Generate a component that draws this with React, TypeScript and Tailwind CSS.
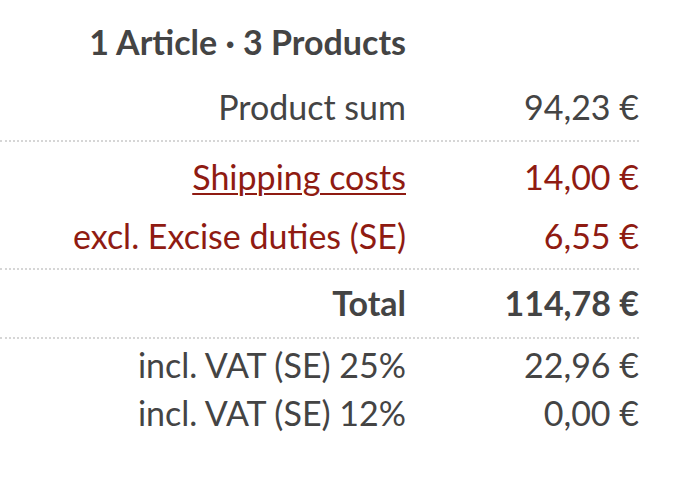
import React from "react";

type Row = {
    label: string;
    value: string;
    link?: boolean;
    red?: boolean;
    bold?: boolean;
};

// spacing per block is taken from the screenshot, not from a scale
const groups: { rows: Row[]; box: string; row: string; border: boolean }[] = [
    {
        rows: [{ label: "Product sum", value: "94,23 €" }],
        box: "pt-[13px] pb-[5px]",
        row: "py-1 leading-[48px]",
        border: true,
    },
    {
        rows: [
            { label: "Shipping costs", value: "14,00 €", link: true, red: true },
            { label: "excl. Excise duties (SE)", value: "6,55 €", red: true },
        ],
        box: "flex flex-col gap-[3px] pt-[7px] pb-[4px]",
        row: "py-1 leading-[48px]",
        border: true,
    },
    {
        rows: [{ label: "Total", value: "114,78 €", bold: true }],
        box: "pt-[5px] pb-[6px]",
        row: "py-1 leading-[48px]",
        border: true,
    },
    {
        rows: [
            { label: "incl. VAT (SE) 25%", value: "22,96 €" },
            { label: "incl. VAT (SE) 12%", value: "0,00 €" },
        ],
        box: "flex flex-col gap-[6px] pt-[5px]",
        row: "leading-[42px]",
        border: false,
    },
];

export default function App() {
    return (
        <div className="min-h-[478px] bg-white pt-[18px] font-['Lato',sans-serif] text-[34px] leading-[48px] text-[#444444]">
            <div className="w-[639px]">
                <div className="flex">
                    <div className="w-[406px] text-right font-bold">1 Article · 3 Products</div>
                </div>

                {groups.map((group, gi) => (
                    <div
                        key={gi}
                        className={`${group.box} ${group.border ? "border-b-2 border-dotted border-[#d6d6d6]" : ""}`}
                    >
                        {group.rows.map((row) => (
                            <div
                                key={row.label}
                                className={`flex ${group.row} ${row.red ? "text-[#8f1b12]" : ""} ${row.bold ? "font-bold" : ""}`}
                            >
                                <div className="w-[406px] text-right">
                                    {row.link ? (
                                        <a href="#" className="underline decoration-2 underline-offset-[3px]">
                                            {row.label}
                                        </a>
                                    ) : (
                                        row.label
                                    )}
                                </div>
                                <div className="flex-1 text-right">{row.value}</div>
                            </div>
                        ))}
                    </div>
                ))}
            </div>
        </div>
    );
}
